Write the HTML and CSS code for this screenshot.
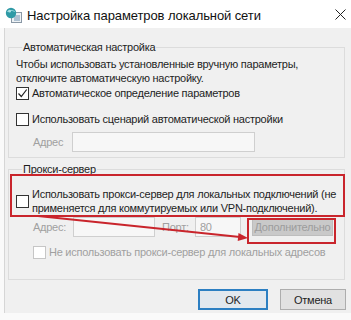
FILE: index.html
```html
<!DOCTYPE html>
<html lang="ru">
  <head>
    <meta charset="UTF-8" />
    <meta name="viewport" content="width=device-width, initial-scale=1.0" />
    <title>Настройка параметров локальной сети</title>
    <link rel="stylesheet" href="styles.css">
  </head>
  <body>
    <div class="page">
      <div class="titlebar">
        <svg class="app-icon" width="17" height="16" viewBox="0 0 17 16">
          <rect x="6.5" y="5.5" width="10" height="10" fill="#eef2f5" stroke="#8a98a6" />
          <path d="M9 9h6M9 11h6M9 13h6" stroke="#6f8fae" />
          <circle cx="6" cy="6" r="5.2" fill="#2f9aa6" />
          <path d="M2.2 4.6c2.4-1.6 5.2-1.6 7.6 0" stroke="#8fd3d8" fill="none" />
          <circle cx="4.6" cy="4.2" r="1.4" fill="#a8e0e4" />
        </svg>
        <span class="title">Настройка параметров локальной сети</span>
        <svg class="close" width="11" height="11" viewBox="0 0 11 11">
          <path d="M0.5 0.5l10 10M10.5 0.5l-10 10" stroke="#222" stroke-width="1" />
        </svg>
      </div>

      <div class="window-body">
        <fieldset class="group auto">
          <legend>Автоматическая настройка</legend>
          <p class="hint">Чтобы использовать установленные вручную параметры,<br />отключите автоматическую настройку.</p>
          <div class="check">
            <span class="box">
              <svg width="11" height="11" viewBox="0 0 11 11">
                <path d="M1.5 5.5l2.8 3 5.4-7" stroke="#222" stroke-width="1.2" fill="none" />
              </svg>
            </span>
            <span>Автоматическое определение параметров</span>
          </div>
          <div class="check check-script">
            <span class="box"></span>
            <span>Использовать сценарий автоматической настройки</span>
          </div>
          <div class="field-row script-row">
            <span class="muted label-script">Адрес</span>
            <span class="input input-script"></span>
          </div>
        </fieldset>

        <fieldset class="group proxy">
          <legend>Прокси-сервер</legend>
          <div class="check two-lines">
            <span class="box"></span>
            <span>Использовать прокси-сервер для локальных подключений (не<br />применяется для коммутируемых или VPN-подключений).</span>
          </div>
          <div class="field-row proxy-row">
            <span class="muted label-addr">Адрес:</span>
            <span class="input input-addr"></span>
            <span class="muted label-port">Порт:</span>
            <span class="input input-port">80</span>
            <span class="btn btn-disabled">Дополнительно</span>
          </div>
          <div class="check check-local disabled">
            <span class="box"></span>
            <span>Не использовать прокси-сервер для локальных адресов</span>
          </div>
        </fieldset>

        <div class="buttons">
          <span class="btn btn-ok">OK</span>
          <span class="btn btn-cancel">Отмена</span>
        </div>
      </div>

      <!-- red annotation marks drawn over the dialog -->
      <svg class="marks" width="351" height="320" viewBox="0 0 351 320">
        <rect x="11" y="175" width="333" height="41" fill="none" stroke="#c9252c" stroke-width="2" />
        <rect x="248" y="219" width="87" height="24" fill="none" stroke="#c9252c" stroke-width="2" />
        <line x1="38" y1="216" x2="240" y2="237" stroke="#c9252c" stroke-width="2" />
        <polygon points="248,238 238.5,233 237.7,241" fill="#c9252c" />
      </svg>
    </div>
  </body>
</html>
```

FILE: styles.css
```css
body {
  margin: 0;
  padding: 0;
  background-color: #fafafa;
  font-family: "Liberation Sans", Arial, sans-serif;
  font-size: 11px;
  letter-spacing: -0.25px;
  color: #1e1e1e;
}
.page {
  position: relative;
  width: 351px;
  height: 320px;
  overflow: hidden;
  white-space: nowrap;
}
.titlebar {
  height: 28px;
  background: #fff;
  display: flex;
  align-items: center;
  padding-left: 5px;
}
.app-icon {
  margin-top: 2px;
}
.title {
  margin-left: 5px;
  margin-top: 2px;
  font-size: 13px;
  letter-spacing: -0.1px;
  color: #111;
}
.close {
  margin-left: auto;
  margin-right: 5px;
}
.window-body {
  margin-left: 4px;
  height: 285px;
  border-left: 1px solid #d6d6d6;
  background: #f0f0f0;
  padding: 0 6px 0 3px;
  box-sizing: border-box;
  display: flex;
  flex-direction: column;
}
.group {
  margin: 0;
  padding: 0 6px 0 7px;
  border: 1px solid #dcdcdc;
  min-width: 0;
}
.group legend {
  padding: 0 1px;
  margin-left: 6px;
  line-height: 14px;
  color: #1e1e1e;
}
.auto {
  margin-top: 12px;
  padding-top: 3px;
  padding-bottom: 5px;
}
.proxy {
  margin-top: 4px;
  padding-top: 11px;
  padding-bottom: 19px;
}
.hint {
  margin: 0;
  line-height: 14px;
}
.check {
  display: flex;
  align-items: center;
  line-height: 16px;
}
.check .box {
  width: 11px;
  height: 11px;
  border: 1px solid #333;
  background: #fff;
  margin-right: 3px;
  flex-shrink: 0;
  display: flex;
}
.check-script {
  margin-top: 10px;
}
.two-lines {
  line-height: 14px;
}
.check-local {
  margin-top: 7px;
  padding-left: 17px;
}
.disabled {
  color: #a0a0a0;
}
.disabled .box {
  border-color: #c6c6c6;
}
.muted {
  color: #a0a0a0;
}
.field-row {
  display: flex;
  align-items: center;
  height: 20px;
  padding-left: 17px;
}
.script-row {
  margin-top: 5px;
}
.proxy-row {
  margin-top: 2px;
}
.input {
  box-sizing: border-box;
  height: 20px;
  border: 1px solid #cfcfcf;
  background: #f7f7f7;
  color: #a0a0a0;
  padding-left: 4px;
  line-height: 18px;
}
.label-script {
  width: 39px;
}
.input-script {
  width: 183px;
}
.label-addr {
  width: 40px;
}
.input-addr {
  width: 82px;
}
.label-port {
  width: 33px;
  margin-left: 7px;
}
.input-port {
  width: 46px;
}
.btn {
  box-sizing: border-box;
  display: flex;
  align-items: center;
  justify-content: center;
  height: 21px;
  border: 1px solid #adadad;
  background: #e1e1e1;
}
.btn-disabled {
  width: 81px;
  height: 18px;
  margin-left: 11px;
  background: #c9c9c9;
  border-color: #bdbdbd;
  color: #9c9c9c;
}
.buttons {
  display: flex;
  justify-content: flex-end;
  gap: 12px;
  margin-top: auto;
  margin-bottom: 3px;
  margin-right: -1px;
}
.btn-ok {
  width: 70px;
  border: 2px solid #2c7fc2;
  background: #e2e8ee;
}
.btn-cancel {
  width: 66px;
}
.marks {
  position: absolute;
  top: 0;
  left: 0;
  pointer-events: none;
}
```
